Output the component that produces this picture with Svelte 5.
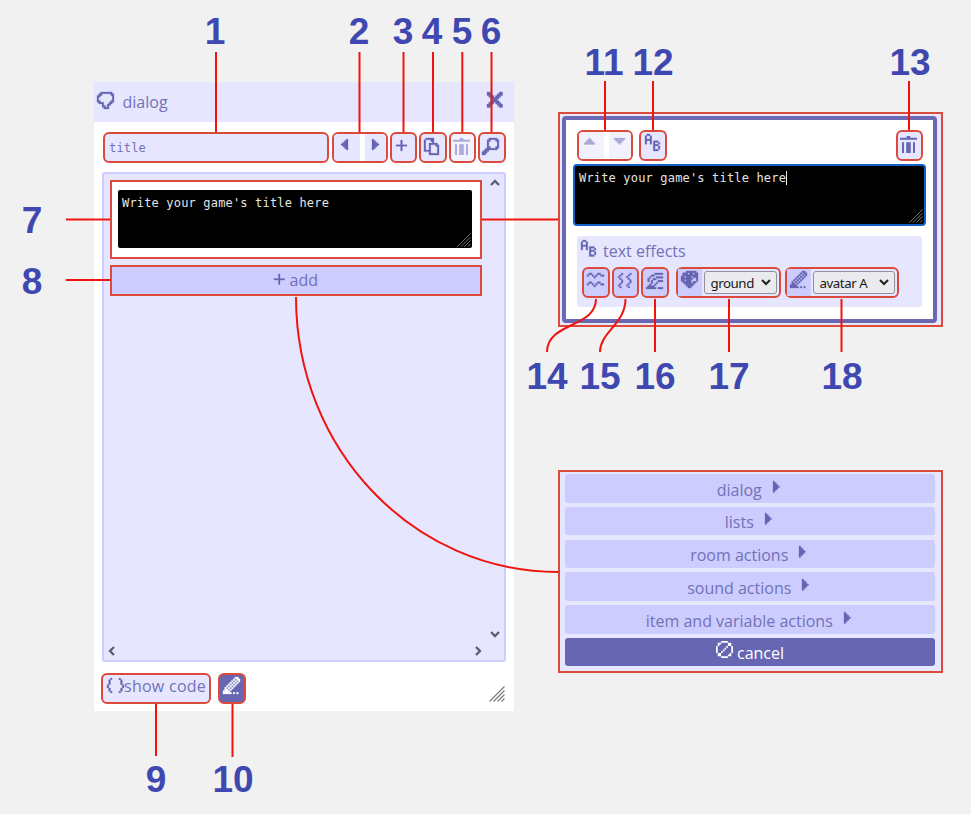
<script>
  const bitmaps = {
    bubble: ['..#######.', '.##.....##', '##.......#', '#........#', '#........#', '##......##', '.###...##.', '...#..##..', '...##.#...', '....###...'],
    close: ['##.....##', '###...###', '.###.###.', '..#####..', '...###...', '..#####..', '.###.###.', '###...###', '##.....##'],
    prev: ['...#', '..##', '.###', '####', '.###', '..##', '...#'],
    next: ['#...', '##..', '###.', '####', '###.', '##..', '#...'],
    up: ['...#...', '..###..', '.#####.', '#######'],
    down: ['#######', '.#####.', '..###..', '...#...'],
    plus: ['...#...', '...#...', '...#...', '#######', '...#...', '...#...', '...#...'],
    copy: ['.#####...', '#...##...', '#....#...', '#..#####.', '#..#...##', '#..#....#', '#..#....#', '####....#', '...#....#', '...######'],
    find: ['....#####.', '...##...##', '...#.....#', '...#.....#', '...#.....#', '...##...##', '..#######.', '.###......', '###.......', '##........'],
    pencil: ['.......##.', '......#.##', '.....#.#.#', '....#.#.#.', '...#.#.#..', '..#.#.#...', '.#.#.#....', '.##.#.....', '####......', '#####.#.#.'],
    code: ['..#....#..', '.#......#.', '.#......#.', '.#......#.', '#........#', '#........#', '.#......#.', '.#......#.', '..#....#..'],
    cancel: ['...####...', '.##....##.', '.#.....##.', '#.....#..#', '#....#...#', '#...#....#', '#..#.....#', '.##.....#.', '.##....##.', '...####...'],
    letters: ['.##......', '#..#.....', '#..#.....', '####.....', '#..#.###.', '#..#.#..#', '.....###.', '.....#..#', '.....#..#', '.....###.'],
    wave: ['.##...##..', '#..#.#..##', '....#.....', '..........', '..........', '.##...##..', '#..#.#..##', '....#.....'],
    shake: ['..#....#.', '.#....#..', '#....#...', '.#....#..', '..#....#.', '..#....#.', '.#....#..', '#....#...', '.#....#..'],
    rainbow: ['.....#####', '...##.....', '..#...####', '.#..##....', '.#.#...###', '...#..#...', '..#..#....', '.####.....', '######.###'],
    palette: ['...######.', '.###.##.##', '.#########', '##.###.###', '#######..#', '##.###...#', '.#####.##.', '..######..', '...####...', '....##....']
  };

  function trace(rows) {
    let d = '';
    rows.forEach((row, y) => {
      for (const m of row.matchAll(/#+/g)) d += `M${m.index} ${y}h${m[0].length}v1h-${m[0].length}z`;
    });
    return d;
  }

  const menu = ['dialog', 'lists', 'room actions', 'sound actions', 'item and variable actions'];

  const labels = [
    [1, 215, 44], [2, 359, 44], [3, 403, 44], [4, 432, 44], [5, 462, 44], [6, 491, 44],
    [7, 32, 233], [8, 32, 294], [9, 156, 792], [10, 233, 792],
    [11, 604, 75], [12, 653, 75], [13, 910, 75],
    [14, 547, 389], [15, 600, 389], [16, 655, 389], [17, 729, 389], [18, 842, 389]
  ];

  const lines = [
    'M216 52V132', 'M359.5 52V132', 'M403.5 52V132', 'M433 52V132', 'M462.3 52V132', 'M491.5 52V132',
    'M66 219.5H110', 'M66 280H110', 'M482 219.5H558', 'M156 704V756', 'M232.5 704V757',
    'M605 81V130', 'M653 81V130', 'M909 81V130',
    'M596 299C596 328 547 322 547 352', 'M625.5 299C625.5 324 600 332 600 352',
    'M655 299V352', 'M729 299V352', 'M841.5 299V352',
    'M296 297C296 449 413 572 558 572'
  ];
</script>

{#snippet icon(name, w, h)}
  <svg class="icon" width={w} height={h} viewBox="0 0 {bitmaps[name][0].length} {bitmaps[name].length}" preserveAspectRatio="none">
    <path d={trace(bitmaps[name])} />
  </svg>
{/snippet}

{#snippet trash()}
  <svg class="icon" width="17" height="17" viewBox="0 0 17 17">
    <path stroke="none" d="M6.7 0h3.6v1.8H6.7zM0 1.8h17v2H0zM2 6.3h2V17H2zM6.2 6.3h4.6V17H6.2zM13 6.3h2V17h-2z" />
  </svg>
{/snippet}

{#snippet grip(color, w)}
  <svg class="grip" width={w} height={w} viewBox="0 0 16 16" fill="none" stroke={color} stroke-width="1.1">
    <path d="M.5 15.5l15-15M4.5 15.5l11-11M8.5 15.5l7-7M12.5 15.5l3-3" />
  </svg>
{/snippet}

{#snippet chevron(angle)}
  <svg width="10" height="10" viewBox="0 0 10 10" fill="none" stroke="#5c5c73" stroke-width="2.3">
    <path d="M1 7l4-4 4 4" transform="rotate({angle} 5 5)" />
  </svg>
{/snippet}

{#snippet caret()}
  <svg width="10" height="7" viewBox="0 0 10 7" fill="none" stroke="#222" stroke-width="2"><path d="M1 1l4 4 4-4" /></svg>
{/snippet}

<main>
  <section class="window">
    <header>
      {@render icon('bubble', 17, 17)}
      <span class="name">dialog</span>
      {@render icon('close', 15.5, 15.5)}
    </header>
    <div class="tools">
      <div class="mark title">title</div>
      <div class="mark pair"><i>{@render icon('prev', 7, 11)}</i><i>{@render icon('next', 7, 11)}</i></div>
      <div class="mark btn plus">{@render icon('plus', 11, 11)}</div>
      <div class="mark btn">{@render icon('copy', 15, 17)}</div>
      <div class="mark btn dim">{@render trash()}</div>
      <div class="mark btn">{@render icon('find', 17, 17)}</div>
    </div>
    <div class="script">
      <div class="upper">
        <div class="entries">
          <div class="card">
            <div class="text">Write your game's title here{@render grip('#777', 14)}</div>
          </div>
          <div class="add">{@render icon('plus', 10.5, 10.5)}<span>add</span></div>
        </div>
        <div class="vbar">{@render chevron(0)}{@render chevron(180)}</div>
      </div>
      <div class="hbar">{@render chevron(270)}{@render chevron(90)}</div>
    </div>
    <footer>
      <div class="mark code">{@render icon('code', 17, 15)}<span>show code</span></div>
      <div class="mark btn dark">{@render icon('pencil', 17, 17)}</div>
      <div class="corner">{@render grip('#777', 16)}</div>
    </footer>
  </section>

  <section class="editor">
    <div class="frame">
      <div class="bar">
        <div class="mark pair faint"><i>{@render icon('up', 11, 6.5)}</i><i>{@render icon('down', 11, 6.5)}</i></div>
        <div class="mark btn ab">{@render icon('letters', 15, 17)}</div>
        <div class="mark btn last">{@render trash()}</div>
      </div>
      <div class="text focus">Write your game's title here<b></b>{@render grip('#777', 14)}</div>
      <div class="effects">
        <div class="heading">{@render icon('letters', 15, 16.5)}<span>text effects</span></div>
        <div class="row">
          <div class="mark btn fx">{@render icon('wave', 17, 14)}</div>
          <div class="mark btn fx">{@render icon('shake', 15, 15)}</div>
          <div class="mark btn fx">{@render icon('rainbow', 17, 16)}</div>
          <div class="mark choice ground"><i>{@render icon('palette', 17, 17)}</i>
            <div class="select"><span>ground</span>{@render caret()}</div>
          </div>
          <div class="mark choice avatar"><i>{@render icon('pencil', 17, 17)}</i>
            <div class="select"><span>avatar A</span>{@render caret()}</div>
          </div>
        </div>
      </div>
    </div>
  </section>

  <section class="menu">
    {#each menu as item}
      <div class="item"><span>{item}</span>{@render icon('next', 6.5, 11.5)}</div>
    {/each}
    <div class="item cancel">{@render icon('cancel', 17, 17)}<span>cancel</span></div>
  </section>

  <svg class="callouts" width="971" height="814" viewBox="0 0 971 814">
    {#each lines as d}<path {d} />{/each}
    {#each labels as [n, x, y]}<text {x} {y}>{n}</text>{/each}
  </svg>
</main>

<style>
  :global(body) { margin: 0; }
  main {
    position: relative;
    width: 971px;
    height: 814px;
    overflow: hidden;
    background: #f1f1f1;
    color: #7272b6;
    font: 16px/20px "Open Sans", sans-serif;
  }
  main * { box-sizing: border-box; }
  svg { display: block; flex: none; }
  .icon { fill: #6666b3; stroke: #6666b3; stroke-width: .18; overflow: visible; }
  i { display: flex; justify-content: center; }
  .mark { border: 2px solid #dc4a3c; border-radius: 6px; background: #e6e6ff; height: 31px; flex: none; }
  .btn { width: 27.5px; display: flex; justify-content: center; padding-top: 3.5px; padding-right: 2px; }
  .btn.plus { padding-top: 5.5px; padding-right: 3px; }
  .btn.ab { padding-top: 2px; padding-right: 1px; }
  .btn.dim { background: #f1f1ff; }
  .dim .icon, .faint .icon { opacity: .5; }
  .btn.dark { background: #6666b3; padding-top: 2px; padding-right: 0; }
  .dark .icon { fill: #fff; stroke: #fff; }
  .pair { width: 56px; display: flex; gap: 5px; background: #fff; overflow: hidden; }
  .pair i { flex: 1; background: #e6e6ff; padding-top: 5px; }
  .pair i:first-child { padding-right: 5px; }
  .faint i { background: #f2f2ff; padding-top: 6px; padding-right: 2px; }

  .window { position: absolute; left: 94px; top: 82px; width: 420px; height: 629px; background: #fff; }
  header { display: flex; height: 40px; padding: 10px 12px 0 3px; background: #e6e6ff; }
  .name { flex: 1; padding-left: 8.5px; }
  .tools { display: flex; gap: 2px; padding: 10px 0 0 9px; height: 50px; }
  .title { width: 226px; margin-right: .5px; padding: 4px; font: 12px/20px "DejaVu Sans Mono", monospace; letter-spacing: .18px; }
  .script { margin: 0 8px; height: 490px; border: 2px solid #ccf; border-radius: 3px; background: #e6e6ff; display: flex; flex-direction: column; }
  .upper { flex: 1; display: flex; }
  .entries { width: 378px; padding: 6px 0 0 6px; }
  .card { height: 79px; border: 2px solid #dc4a3c; background: #fff; padding: 8px 8px 9px 6px; }
  .text { position: relative; height: 58px; background: #000; border-radius: 2px; color: #e4e4e4; padding: 3px 4px; font: 12px/20px "DejaVu Sans Mono", monospace; letter-spacing: .17px; }
  .text .grip { position: absolute; right: 1px; bottom: 1px; }
  .add { display: flex; justify-content: center; gap: 5px; margin-top: 6px; height: 31px; border: 2px solid #dc4a3c; background: #ccf; padding-top: 3px; }
  .add .icon { margin-top: 4px; }
  .vbar { flex: 1; display: flex; flex-direction: column; justify-content: space-between; align-items: center; padding: 4px 0 5px 4px; }
  .hbar { display: flex; justify-content: space-between; padding: 2px 21px 4px 3px; }
  footer { display: flex; padding: 11px 8px 0 7px; }
  .code { width: 110px; margin-right: 7px; display: flex; padding: 1px 0 0 4px; white-space: nowrap; letter-spacing: .27px; }
  .code .icon { margin-top: 1.5px; }
  .corner { margin: 13px 1px 0 auto; }

  .editor { position: absolute; left: 558px; top: 112px; width: 385px; height: 215px; border: 2px solid #dc4a3c; background: #eae6fb; padding: 2px 4px 3px 2px; }
  .frame { height: 207px; border: 4px solid #6b68b3; border-radius: 4px; background: #fff; padding: 10px 7px; }
  .bar { display: flex; gap: 6px; padding: 0 3px 0 4px; height: 34px; }
  .last { margin-left: auto; }
  .focus { height: 62px; border: 2px solid #1260c8; border-radius: 4px; padding-top: 2px; }
  .focus b { display: inline-block; width: 1px; height: 14px; background: #eee; vertical-align: -3px; }
  .effects { margin: 10px 4px 0; height: 71px; border-radius: 3px; background: #e6e6ff; padding: 4px 5px; }
  .heading { display: flex; gap: 7px; height: 27px; margin-left: -1px; }
  .heading span { padding-top: 1px; }
  .row { display: flex; gap: 2px; }
  .fx { background: #ccf; padding-right: 0; }
  .choice { display: flex; background: #e6e6ff; padding: 2px 2px 2px 0; }
  .choice i { width: 24px; background: #ccf; margin: -2px 0; padding-top: 2px; }
  .ground { width: 105px; margin: 0 2px 0 5px; }
  .avatar { width: 114px; }
  .select { flex: 1; margin-left: 2px; display: flex; align-items: center; justify-content: space-between; padding: 0 5px 0 6px; border: 1px solid #8f8f9d; border-radius: 3px; background: #ebebef; color: #181818; font: 13.3px/20px "Noto Sans", sans-serif; letter-spacing: -.45px; white-space: nowrap; }

  .menu { position: absolute; left: 558px; top: 470px; width: 385px; height: 203px; border: 2px solid #dc4a3c; background: #e6e6ff; padding: 2px 6px 0 5px; display: flex; flex-direction: column; gap: 4.3px; }
  .item { display: flex; justify-content: center; gap: 11px; height: 28.5px; border-radius: 3px; background: #ccf; padding: 5.5px 4px 0 0; line-height: 20px; }
  .item .icon { margin-top: 1px; }
  .item.cancel { gap: 4px; padding-right: 0; background: #6666b3; color: #fff; }
  .cancel .icon { fill: #fff; stroke: none; margin-top: -2px; }

  .callouts { position: absolute; left: 0; top: 0; }
  .callouts path { fill: none; stroke: #f0140f; stroke-width: 2; }
  .callouts text { fill: #3f48b0; font: bold 37px "Liberation Sans", sans-serif; text-anchor: middle; }
</style>
